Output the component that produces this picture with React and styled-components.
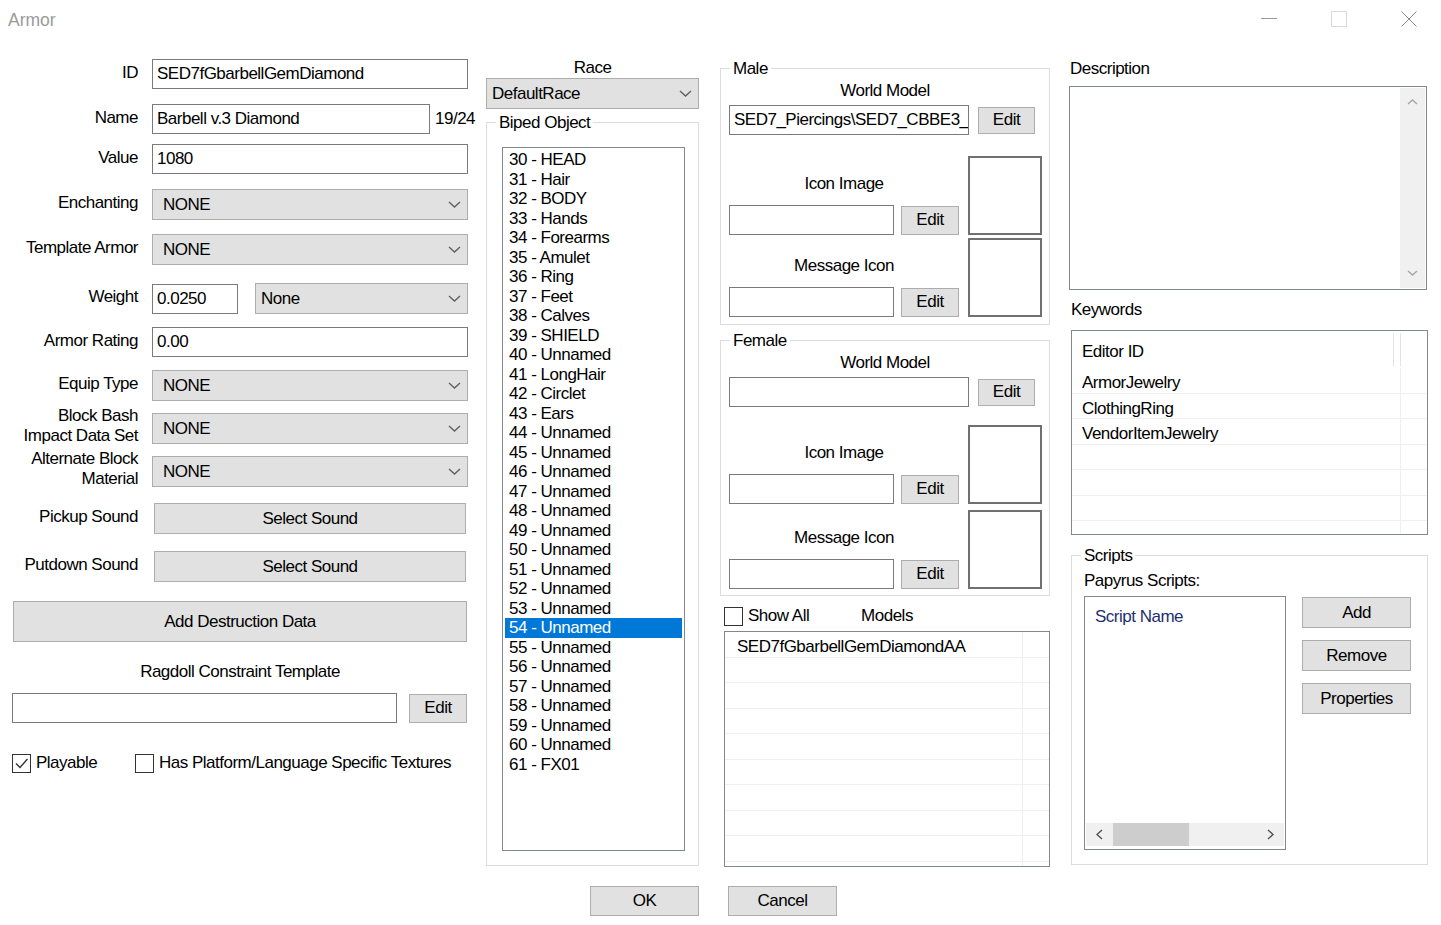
import React from 'react';
import styled, { createGlobalStyle } from 'styled-components';

const GlobalStyle = createGlobalStyle`
  html, body {
    margin: 0;
    padding: 0;
    background: #fff;
  }
  body {
    font-family: "Liberation Sans", Arial, sans-serif;
    font-size: 17px;
    letter-spacing: -0.5px;
    color: #000;
  }
  * {
    box-sizing: border-box;
  }
`;

const Window = styled.div`
  width: 1441px;
  height: 925px;
  background: #fff;
  overflow: hidden;
  display: flex;
  flex-direction: column;
`;

const TitleBar = styled.div`
  height: 40px;
  flex-shrink: 0;
  display: flex;
  justify-content: space-between;
`;

const Title = styled.div`
  padding: 9px 0 0 8px;
  font-size: 17.5px;
  letter-spacing: 0;
  line-height: 22px;
  color: #9a9a9a;
`;

const WindowButtons = styled.div`
  display: flex;
  gap: 54px;
  padding: 11px 24px 0 0;
`;

const Body = styled.div`
  display: flex;
  align-items: flex-start;
  padding-left: 12px;
`;

const Column = styled.div`
  display: flex;
  flex-direction: column;
  width: ${(p) => p.$w}px;
  margin-left: ${(p) => p.$ml || 0}px;
  flex-shrink: 0;
`;

const FieldRow = styled.div`
  display: grid;
  grid-template-columns: 126px 1fr;
  column-gap: 14px;
  align-items: center;
  margin-top: ${(p) => p.$mt}px;
`;

const FieldLabel = styled.div`
  text-align: right;
  line-height: 20px;
  white-space: nowrap;
  padding-bottom: ${(p) => (p.$twoLine ? 0 : 3)}px;
  margin: ${(p) => (p.$twoLine ? '-8px 0 -2px' : '0')};
`;

const Inline = styled.div`
  display: flex;
  align-items: center;
  gap: ${(p) => p.$gap || 0}px;
  margin-top: ${(p) => p.$mt || 0}px;
  margin-left: ${(p) => p.$ml || 0}px;
`;

const TextBox = styled.div`
  height: ${(p) => p.$h || 30}px;
  width: ${(p) => (p.$w ? `${p.$w}px` : 'auto')};
  flex-shrink: 0;
  border: 1px solid #7a7a7a;
  background: #fff;
  padding: 0 4px;
  display: flex;
  align-items: center;
  white-space: nowrap;
  overflow: hidden;
`;

const Counter = styled.span`
  margin-left: 5px;
  white-space: nowrap;
`;

const Combo = styled.div`
  height: 31px;
  width: ${(p) => (p.$w ? `${p.$w}px` : 'auto')};
  flex-shrink: 0;
  background: #e1e1e1;
  border: 1px solid #adadad;
  display: flex;
  align-items: center;
  justify-content: space-between;
  padding: 0 6px 0 ${(p) => p.$pl || 10}px;
  margin-top: ${(p) => p.$mt || 0}px;
  margin-left: ${(p) => p.$ml || 0}px;
`;

const Button = styled.div`
  height: ${(p) => p.$h || 30}px;
  width: ${(p) => (p.$w ? `${p.$w}px` : 'auto')};
  flex-shrink: 0;
  background: #e1e1e1;
  border: 1px solid #adadad;
  display: flex;
  align-items: center;
  justify-content: center;
  margin-top: ${(p) => p.$mt || 0}px;
  margin-left: ${(p) => p.$ml || 0}px;
`;

const Caption = styled.div`
  text-align: ${(p) => p.$align || 'center'};
  line-height: ${(p) => p.$lh || 18}px;
  margin-top: ${(p) => p.$mt || 0}px;
  margin-bottom: ${(p) => p.$mb || 0}px;
  padding-left: ${(p) => p.$pl || 0}px;
  white-space: nowrap;
`;

const CheckRow = styled.div`
  display: flex;
  align-items: center;
  margin-top: ${(p) => p.$mt}px;
`;

const CheckLabel = styled.label`
  display: flex;
  align-items: center;
  gap: 5px;
  line-height: 20px;
  width: ${(p) => (p.$w ? `${p.$w}px` : 'auto')};
  white-space: nowrap;
`;

const Box = styled.span`
  width: 19px;
  height: 19px;
  flex-shrink: 0;
  border: 1px solid #333;
  background: #fff;
  display: inline-flex;
  align-items: center;
  justify-content: center;
`;

const GroupBox = styled.div`
  position: relative;
  border: 1px solid #dcdcdc;
  margin-top: ${(p) => p.$mt || 0}px;
  margin-left: ${(p) => p.$ml || 0}px;
  padding: ${(p) => p.$pad};
`;

const GroupCaption = styled.span`
  position: absolute;
  top: -10px;
  left: 9px;
  padding: 0 3px;
  line-height: 20px;
  background: #fff;
`;

const BipedList = styled.div`
  width: 183px;
  height: 704px;
  border: 1px solid #828790;
  background: #fff;
  padding: 2px 1px;
`;

const BipedItem = styled.div`
  height: 19.5px;
  line-height: 20px;
  margin: 0 1px;
  padding-left: 4px;
  white-space: nowrap;
  background: ${(p) => (p.$selected ? '#0078d7' : 'transparent')};
  color: ${(p) => (p.$selected ? '#fff' : '#000')};
`;

const IconSection = styled.div`
  display: grid;
  grid-template-columns: 230px 74px;
  column-gap: 9px;
  margin-top: ${(p) => p.$mt}px;
`;

const Stack = styled.div`
  display: grid;
  grid-template-rows: 79px 79px;
  row-gap: ${(p) => p.$gap}px;
`;

const IconField = styled.div`
  display: flex;
  flex-direction: column;
  justify-content: flex-end;
`;

const Preview = styled.div`
  border: 2px solid #707070;
  background: #fff;
`;

const ShowRow = styled.div`
  display: grid;
  grid-template-columns: 1fr auto 1fr;
  align-items: center;
  line-height: 20px;
  margin-top: 10px;
  padding-left: 4px;
`;

const GridList = styled.div`
  height: ${(p) => p.$h}px;
  width: ${(p) => p.$w}px;
  margin-top: ${(p) => p.$mt}px;
  margin-left: ${(p) => p.$ml || 0}px;
  border: 1px solid #828790;
  background: #fff;
  overflow: hidden;
`;

const GridRow = styled.div`
  display: flex;
  height: 25.5px;
  border-bottom: 1px solid #efefef;
`;

const GridCell = styled.div`
  width: ${(p) => p.$w}px;
  height: 100%;
  border-right: 1px solid #efefef;
  padding-left: ${(p) => p.$pl}px;
  line-height: 29px;
  white-space: nowrap;
`;

const HeaderRow = styled.div`
  display: flex;
  height: 37px;
  padding-top: 2px;
`;

const HeaderCell = styled.div`
  width: ${(p) => p.$w}px;
  height: 33px;
  border-right: 1px solid #e3e3e3;
  padding-left: ${(p) => p.$pl || 0}px;
  line-height: 38px;
`;

const DescBox = styled.div`
  height: 204px;
  width: 358px;
  margin-top: 8px;
  border: 1px solid #828790;
  background: #fff;
  display: flex;
  justify-content: flex-end;
  padding: 1px;
`;

const VScroll = styled.div`
  width: 25px;
  background: #f0f0f0;
  display: flex;
  flex-direction: column;
  justify-content: space-between;
  align-items: center;
  padding: 11px 0 12px;
`;

const ScriptsBody = styled.div`
  display: grid;
  grid-template-columns: 202px 109px;
  column-gap: 16px;
  align-items: start;
  margin-top: 6px;
`;

const ScriptList = styled.div`
  height: 254px;
  border: 1px solid #828790;
  background: #fff;
  display: flex;
  flex-direction: column;
  justify-content: space-between;
`;

const ScriptHeader = styled.div`
  padding: 10px 0 0 10px;
  line-height: 20px;
  color: #1e2f6e;
`;

const HScroll = styled.div`
  height: 23px;
  margin: 0 1px 3px;
  background: #f0f0f0;
  display: flex;
  align-items: center;
`;

const ArrowCell = styled.div`
  width: 27px;
  display: flex;
  justify-content: center;
`;

const Thumb = styled.div`
  width: 76px;
  height: 100%;
  background: #cdcdcd;
`;

const ScrollTrack = styled.div`
  flex: 1;
`;

const ButtonStack = styled.div`
  display: flex;
  flex-direction: column;
  gap: 12px;
  margin-top: 1px;
`;

const Footer = styled.div`
  display: flex;
  gap: 29px;
  margin-top: 19px;
  padding-left: 590px;
`;

const Chevron = ({ dir = 'down', color = '#606060', w = 13, h = 7 }) => {
  const pts = {
    down: `1,1 ${w / 2},${h - 1} ${w - 1},1`,
    up: `1,${h - 1} ${w / 2},1 ${w - 1},${h - 1}`,
    left: `${w - 1},1 1,${h / 2} ${w - 1},${h - 1}`,
    right: `1,1 ${w - 1},${h / 2} 1,${h - 1}`,
  }[dir];
  return (
    <svg width={w} height={h} viewBox={`0 0 ${w} ${h}`}>
      <polyline points={pts} fill="none" stroke={color} strokeWidth="1.4" />
    </svg>
  );
};

const CheckBox = ({ checked }) => (
  <Box>
    {checked && (
      <svg width="15" height="15" viewBox="0 0 15 15">
        <polyline points="2,7.5 6,11.5 13.5,3" fill="none" stroke="#333" strokeWidth="1.4" />
      </svg>
    )}
  </Box>
);

const DropDown = ({ value, w, pl, mt, ml }) => (
  <Combo $w={w} $pl={pl} $mt={mt} $ml={ml}>
    <span>{value}</span>
    <Chevron />
  </Combo>
);

const bipedNames = {
  30: 'HEAD',
  31: 'Hair',
  32: 'BODY',
  33: 'Hands',
  34: 'Forearms',
  35: 'Amulet',
  36: 'Ring',
  37: 'Feet',
  38: 'Calves',
  39: 'SHIELD',
  41: 'LongHair',
  42: 'Circlet',
  43: 'Ears',
  61: 'FX01',
};

const bipedSlots = Array.from({ length: 32 }, (_, i) => 30 + i).map((n) => ({
  n,
  label: `${n} - ${bipedNames[n] || 'Unnamed'}`,
}));

const ModelGroup = ({ title, worldModel, mt, iconMt, gap, padBottom }) => (
  <GroupBox $mt={mt} $pad={`13px 8px ${padBottom}px 8px`}>
    <GroupCaption>{title}</GroupCaption>
    <Caption>World Model</Caption>
    <Inline $gap={9} $mt={5}>
      <TextBox $w={240}>{worldModel}</TextBox>
      <Button $w={57} $h={27}>Edit</Button>
    </Inline>
    <IconSection $mt={iconMt}>
      <Stack $gap={gap}>
        <IconField>
          <Caption $mb={12}>Icon Image</Caption>
          <Inline $gap={7}>
            <TextBox $w={165} />
            <Button $w={58} $h={29}>Edit</Button>
          </Inline>
        </IconField>
        <IconField>
          <Caption $mb={12}>Message Icon</Caption>
          <Inline $gap={7}>
            <TextBox $w={165} />
            <Button $w={58} $h={29}>Edit</Button>
          </Inline>
        </IconField>
      </Stack>
      <Stack $gap={gap}>
        <Preview />
        <Preview />
      </Stack>
    </IconSection>
  </GroupBox>
);

export default function App() {
  return (
    <Window>
      <GlobalStyle />
      <TitleBar>
        <Title>Armor</Title>
        <WindowButtons>
          <svg width="16" height="16" viewBox="0 0 16 16">
            <line x1="0" y1="7.5" x2="16" y2="7.5" stroke="#9a9a9a" strokeWidth="1" />
          </svg>
          <svg width="16" height="16" viewBox="0 0 16 16">
            <rect x="0.5" y="0.5" width="15" height="15" fill="none" stroke="#d9d9d9" strokeWidth="1" />
          </svg>
          <svg width="16" height="16" viewBox="0 0 16 16">
            <line x1="0.5" y1="0.5" x2="15.5" y2="15.5" stroke="#8a8a8a" strokeWidth="1" />
            <line x1="15.5" y1="0.5" x2="0.5" y2="15.5" stroke="#8a8a8a" strokeWidth="1" />
          </svg>
        </WindowButtons>
      </TitleBar>

      <Body>
        {/* general fields */}
        <Column $w={456}>
          <FieldRow $mt={19}>
            <FieldLabel>ID</FieldLabel>
            <TextBox>SED7fGbarbellGemDiamond</TextBox>
          </FieldRow>
          <FieldRow $mt={15}>
            <FieldLabel>Name</FieldLabel>
            <Inline>
              <TextBox $w={278}>Barbell v.3 Diamond</TextBox>
              <Counter>19/24</Counter>
            </Inline>
          </FieldRow>
          <FieldRow $mt={10}>
            <FieldLabel>Value</FieldLabel>
            <TextBox>1080</TextBox>
          </FieldRow>
          <FieldRow $mt={15}>
            <FieldLabel>Enchanting</FieldLabel>
            <DropDown value="NONE" />
          </FieldRow>
          <FieldRow $mt={14}>
            <FieldLabel>Template Armor</FieldLabel>
            <DropDown value="NONE" />
          </FieldRow>
          <FieldRow $mt={18}>
            <FieldLabel>Weight</FieldLabel>
            <Inline>
              <TextBox $w={86}>0.0250</TextBox>
              <DropDown value="None" w={213} pl={5} ml={17} />
            </Inline>
          </FieldRow>
          <FieldRow $mt={13}>
            <FieldLabel>Armor Rating</FieldLabel>
            <TextBox>0.00</TextBox>
          </FieldRow>
          <FieldRow $mt={13}>
            <FieldLabel>Equip Type</FieldLabel>
            <DropDown value="NONE" />
          </FieldRow>
          <FieldRow $mt={12}>
            <FieldLabel $twoLine>
              Block Bash
              <br />
              Impact Data Set
            </FieldLabel>
            <DropDown value="NONE" />
          </FieldRow>
          <FieldRow $mt={12}>
            <FieldLabel $twoLine>
              Alternate Block
              <br />
              Material
            </FieldLabel>
            <DropDown value="NONE" />
          </FieldRow>
          <FieldRow $mt={16}>
            <FieldLabel>Pickup Sound</FieldLabel>
            <Button $w={312} $h={31} $ml={2}>Select Sound</Button>
          </FieldRow>
          <FieldRow $mt={17}>
            <FieldLabel>Putdown Sound</FieldLabel>
            <Button $w={312} $h={31} $ml={2}>Select Sound</Button>
          </FieldRow>
          <Button $h={41} $w={454} $ml={1} $mt={19}>Add Destruction Data</Button>
          <Caption $mt={20} $lh={20}>Ragdoll Constraint Template</Caption>
          <Inline $gap={12} $mt={11}>
            <TextBox $w={385} />
            <Button $w={58} $h={29}>Edit</Button>
          </Inline>
          <CheckRow $mt={30}>
            <CheckLabel $w={123}>
              <CheckBox checked />
              Playable
            </CheckLabel>
            <CheckLabel>
              <CheckBox />
              Has Platform/Language Specific Textures
            </CheckLabel>
          </CheckRow>
        </Column>

        {/* race and biped slots */}
        <Column $w={213} $ml={18}>
          <Caption $mt={19}>Race</Caption>
          <DropDown value="DefaultRace" pl={5} mt={1} />
          <GroupBox $mt={13} $pad="24px 0 14px 15px">
            <GroupCaption>Biped Object</GroupCaption>
            <BipedList>
              {bipedSlots.map((slot) => (
                <BipedItem key={slot.n} $selected={slot.n === 54}>
                  {slot.label}
                </BipedItem>
              ))}
            </BipedList>
          </GroupBox>
        </Column>

        {/* male / female models */}
        <Column $w={330} $ml={21}>
          <ModelGroup
            title="Male"
            worldModel="SED7_Piercings\SED7_CBBE3_"
            mt={28}
            iconMt={21}
            gap={3}
            padBottom={7}
          />
          <ModelGroup title="Female" worldModel="" mt={15} iconMt={18} gap={6} padBottom={6} />
          <ShowRow>
            <CheckLabel>
              <CheckBox />
              Show All
            </CheckLabel>
            <span>Models</span>
            <span />
          </ShowRow>
          <GridList $w={326} $h={236} $mt={5} $ml={4}>
            {['SED7fGbarbellGemDiamondAA', '', '', '', '', '', '', '', '', ''].map((m, i) => (
              <GridRow key={i}>
                <GridCell $w={298} $pl={12}>
                  {m}
                </GridCell>
              </GridRow>
            ))}
          </GridList>
        </Column>

        {/* description, keywords, scripts */}
        <Column $w={359} $ml={19}>
          <Caption $align="left" $mt={20} $pl={1}>
            Description
          </Caption>
          <DescBox>
            <VScroll>
              <Chevron dir="up" color="#a6a6a6" w={11} h={6} />
              <Chevron dir="down" color="#a6a6a6" w={11} h={6} />
            </VScroll>
          </DescBox>
          <Caption $align="left" $mt={11} $pl={2}>
            Keywords
          </Caption>
          <GridList $w={357} $h={205} $mt={11} $ml={2}>
            <HeaderRow>
              <HeaderCell $w={322} $pl={10}>
                Editor ID
              </HeaderCell>
              <HeaderCell $w={7} />
            </HeaderRow>
            {['ArmorJewelry', 'ClothingRing', 'VendorItemJewelry', '', '', '', ''].map((k, i) => (
              <GridRow key={i}>
                <GridCell $w={329} $pl={10}>
                  {k}
                </GridCell>
              </GridRow>
            ))}
          </GridList>
          <GroupBox $mt={20} $ml={2} $pad="16px 0 14px 12px">
            <GroupCaption>Scripts</GroupCaption>
            <Caption $align="left">Papyrus Scripts:</Caption>
            <ScriptsBody>
              <ScriptList>
                <ScriptHeader>Script Name</ScriptHeader>
                <HScroll>
                  <ArrowCell>
                    <Chevron dir="left" color="#505050" w={7} h={11} />
                  </ArrowCell>
                  <Thumb />
                  <ScrollTrack />
                  <ArrowCell>
                    <Chevron dir="right" color="#505050" w={7} h={11} />
                  </ArrowCell>
                </HScroll>
              </ScriptList>
              <ButtonStack>
                <Button $h={31}>Add</Button>
                <Button $h={31}>Remove</Button>
                <Button $h={31}>Properties</Button>
              </ButtonStack>
            </ScriptsBody>
          </GroupBox>
        </Column>
      </Body>

      <Footer>
        <Button $w={109} $h={30}>OK</Button>
        <Button $w={109} $h={30}>Cancel</Button>
      </Footer>
    </Window>
  );
}
